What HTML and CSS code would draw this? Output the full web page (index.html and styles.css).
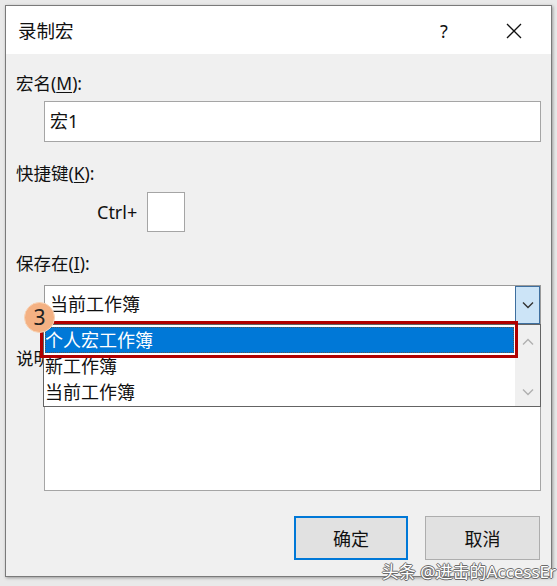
FILE: index.html
```html
<!DOCTYPE html>
<html lang="zh-CN">
<head>
<meta charset="utf-8">
<title>录制宏</title>
<link rel="stylesheet" href="styles.css">
</head>
<body>
<div class="dialog">
  <div class="titlebar">
    <span class="title">录制宏</span>
    <span class="help">?</span>
    <span class="close"><svg width="16" height="16" viewBox="0 0 16 16"><path d="M1 1 L15 15 M15 1 L1 15" stroke="#111" stroke-width="1.3" fill="none"/></svg></span>
  </div>
  <div class="content">
    <div class="label">宏名(<u>M</u>):</div>
    <div class="field textbox">宏1</div>
    <div class="label l2">快捷键(<u>K</u>):</div>
    <div class="shortcut"><span class="ctrl">Ctrl+</span><span class="keybox"></span></div>
    <div class="label l2">保存在(<u>I</u>):</div>
    <div class="combo-wrap">
      <div class="field combo">
        <span class="combo-text">当前工作簿</span>
        <span class="drop-btn"><svg width="12" height="8" viewBox="0 0 12 8"><path d="M1 1.5 L6 6.5 L11 1.5" stroke="#333" stroke-width="1.4" fill="none"/></svg></span>
      </div>
      <div class="dropdown">
        <div class="options">
          <div class="opt sel">个人宏工作簿</div>
          <div class="opt">新工作簿</div>
          <div class="opt">当前工作簿</div>
        </div>
        <div class="scroll">
          <svg width="12" height="8" viewBox="0 0 12 8"><path d="M1 6.5 L6 1.5 L11 6.5" stroke="#b0b0b0" stroke-width="1.4" fill="none"/></svg>
          <svg width="12" height="8" viewBox="0 0 12 8"><path d="M1 1.5 L6 6.5 L11 1.5" stroke="#b0b0b0" stroke-width="1.4" fill="none"/></svg>
        </div>
      </div>
      <div class="annot-rect"></div>
      <div class="badge">3</div>
    </div>
    <div class="label l3">说明(<u>D</u>):</div>
    <div class="field desc"></div>
    <div class="buttons">
      <button class="btn default">确定</button>
      <button class="btn">取消</button>
    </div>
  </div>
  <div class="watermark">头条 @进击的AccessEr</div>
</div>
</body>
</html>
```

FILE: styles.css
```css
* { box-sizing: border-box; }
html, body { margin: 0; padding: 0; }
body {
  background: #e9e9e9;
  width: 557px;
  height: 586px;
  overflow: hidden;
  font-family: "Noto Sans", "Noto Sans CJK SC", sans-serif;
  font-size: 18px;
  color: #111;
}
.dialog {
  position: relative;
  margin: 5px 0 0 5px;
  width: 547px;
  height: 572px;
  border: 1px solid #7a7a7a;
  background: #f0f0f0;
  box-shadow: 1px 1px 3px rgba(0,0,0,0.35);
}
.titlebar {
  height: 48px;
  background: #fff;
  display: flex;
  align-items: center;
  padding: 2px 0 0 12px;
}
.title { font-size: 18.5px; line-height: 24px; flex: 1; }
.help { font-size: 18px; line-height: 24px; width: 12px; margin-right: 54px; }
.close { width: 16px; height: 16px; margin-right: 29px; display: flex; }
.content { padding: 17px 10px 0 10px; }
.label { line-height: 24px; height: 24px; font-size: 17.5px; }
.label u { text-underline-offset: 2px; }
.l2 { margin-top: 19px; }
.l3 { margin-top: 22px; }
.field {
  margin-left: 28px;
  background: #fff;
  border: 1px solid #a5a5a5;
}
.textbox {
  margin-top: 6px;
  height: 41px;
  line-height: 39px;
  padding-left: 5px;
}
.shortcut {
  margin-top: 7px;
  height: 40px;
  display: flex;
  align-items: center;
  padding-left: 81px;
}
.ctrl { width: 50px; }
.keybox {
  width: 38px;
  height: 40px;
  background: #fff;
  border: 1px solid #a5a5a5;
}
.combo-wrap { position: relative; margin-top: 10px; margin-left: 28px; }
.combo {
  margin-left: 0;
  height: 39px;
  display: flex;
  align-items: stretch;
  padding-left: 5px;
  border-color: #9a9a9a;
}
.combo-text { flex: 1; line-height: 37px; }
.drop-btn {
  width: 25px;
  margin: 0 0 -1px 0;
  background: #cce4f7;
  border: 1px solid #3e6f9f;
  display: flex;
  align-items: center;
  justify-content: center;
}
.dropdown {
  position: absolute;
  top: 39px;
  left: -1px;
  right: 0;
  height: 83px;
  background: #fff;
  border: 1px solid #646464;
  display: flex;
  z-index: 2;
}
.options { flex: 1; padding: 2px 1px 0 1px; }
.opt { height: 26px; line-height: 26px; padding-left: 0; white-space: nowrap; }
.opt.sel {
  background: #0078d7;
  color: #fff;
  outline: 1px dotted #555;
  outline-offset: -1px;
}
.scroll {
  width: 25px;
  background: #f0f0f0;
  display: flex;
  flex-direction: column;
  align-items: center;
  justify-content: space-between;
  padding: 13px 0 10px;
}
.annot-rect {
  position: absolute;
  left: -4px;
  top: 36px;
  width: 478px;
  height: 37px;
  border: 3px solid #b00000;
  z-index: 3;
}
.badge {
  position: absolute;
  left: -20px;
  top: 17px;
  width: 31px;
  height: 31px;
  border-radius: 50%;
  background: #f4b183;
  border: 1px solid #f8d3b5;
  color: #222;
  font-size: 21px;
  line-height: 29px;
  text-align: center;
  z-index: 4;
}
.desc { margin-top: 5px; height: 116px; }
.buttons {
  margin-top: 25px;
  padding-right: 1px;
  display: flex;
  justify-content: flex-end;
  gap: 17px;
}
.btn {
  font-family: "Noto Sans", "Noto Sans CJK SC", sans-serif;
  font-size: 18px;
  color: #111;
  height: 44px;
  width: 115px;
  background: #e1e1e1;
  border: 1px solid #adadad;
  padding: 0;
}
.btn.default { width: 114px; border: 2px solid #0078d7; }
.watermark {
  position: absolute;
  right: -5px;
  bottom: -7px;
  font-size: 17px;
  line-height: 22px;
  color: #fff;
  white-space: nowrap;
  text-shadow: -1px 0 #6a6a6a, 1px 0 #6a6a6a, 0 1px #6a6a6a, 0 -1px #6a6a6a;
}
```
